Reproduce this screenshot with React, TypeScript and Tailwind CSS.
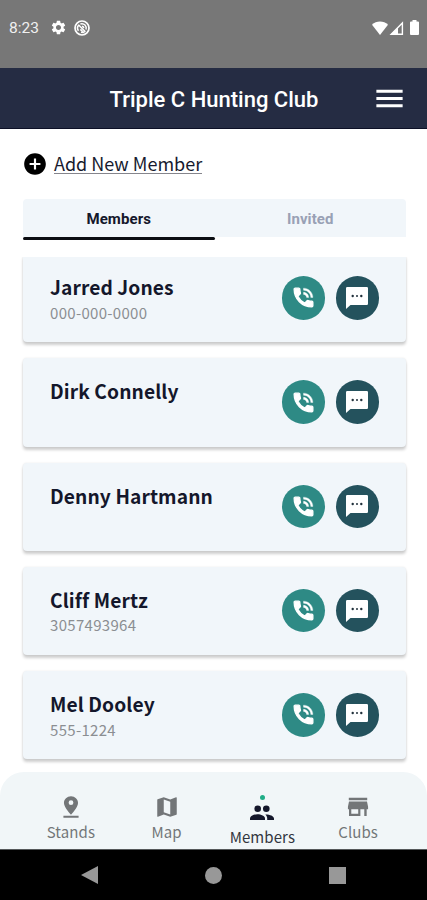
import React, { useState } from "react";
import { MdAddCircle, MdMenu, MdSettings } from "react-icons/md";

interface IMember {
  name: string;
  phone: string;
}

const members: IMember[] = [
  { name: "Jarred Jones", phone: "000-000-0000" },
  { name: "Dirk Connelly", phone: "" },
  { name: "Denny Hartmann", phone: "" },
  { name: "Cliff Mertz", phone: "3057493964" },
  { name: "Mel Dooley", phone: "555-1224" },
];

interface IconProps {
  className?: string;
}

const PinIcon: React.FC<IconProps> = ({ className }) => (
  <svg viewBox="0 0 24 24" className={className} fill="currentColor">
    <path d="M18.500 8.200C18.500 4.700 15.600 2 12 2S5.500 4.700 5.500 8.200C5.500 12.500 12 19 12 19s6.500-6.500 6.500-10.800zM9.800 8a2.200 2.200 0 1 1 4.400 0 2.200 2.200 0 0 1-4.400 0zM5 20v2h14v-2H5z" />
  </svg>
);

const MapIcon: React.FC<IconProps> = ({ className }) => (
  <svg viewBox="0 0 24 24" className={className} fill="currentColor">
    <path d="M20.500 3l-.16.03L15 5.100 9 3 3.360 4.900c-.21.07-.36.25-.36.48V20.500c0 .28.22.5.5.5l.16-.03L9 18.900l6 2.100 5.640-1.900c.21-.07.36-.25.36-.48V3.500c0-.28-.22-.5-.5-.5zM15 19l-6-2.110V5l6 2.110V19z" />
  </svg>
);

const PeopleIcon: React.FC<IconProps> = ({ className }) => (
  <svg viewBox="0 0 24 24" className={className} fill="currentColor">
    <circle cx="7.700" cy="7.700" r="3.300" />
    <circle cx="16.300" cy="7.700" r="3.300" />
    <path d="M0 19v-1.500c0-2.600 4-4.300 7.500-4.300s7.500 1.700 7.500 4.300V19z" />
    <path d="M17.200 19v-1.700c0-1.600-.8-2.900-1.900-3.900 4.400-.1 8.700 1.500 8.700 4.100V19z" />
  </svg>
);

const StoreIcon: React.FC<IconProps> = ({ className }) => (
  <svg viewBox="0 0 24 24" className={className} fill="currentColor">
    <path d="M20.500 3.500h-17v2.300h17V3.500zm.8 10.500v-2.200L20.300 7H3.700l-1 4.800V14h1v6.200h10.500V14h3.600v6.200H20V14h1.300zm-9.100 4.200H5.800V14h6.400v4.200z" />
  </svg>
);

const PhoneIcon: React.FC<IconProps> = ({ className }) => (
  <svg viewBox="0 0 24 24" className={className} fill="currentColor" stroke="currentColor">
    <path
      strokeWidth="1.200"
      d="M20 15.500c-1.250 0-2.450-.2-3.570-.57-.35-.11-.74-.03-1.020.24l-2.200 2.200c-2.830-1.440-5.150-3.750-6.590-6.590l2.200-2.210c.28-.26.36-.65.25-1C8.700 6.450 8.500 5.250 8.500 4c0-.55-.45-1-1-1H4c-.55 0-1 .45-1 1 0 9.390 7.610 17 17 17 .55 0 1-.45 1-1v-3.500c0-.55-.45-1-1-1z"
    />
    <path
      strokeWidth="0.3"
      d="M19 12h2c0-4.970-4.030-9-9-9v2c3.870 0 7 3.130 7 7zm-4 0h2c0-2.760-2.240-5-5-5v2c1.660 0 3 1.340 3 3z"
    />
  </svg>
);

const MessageIcon: React.FC<IconProps> = ({ className }) => (
  <svg viewBox="0 0 22 22" className={className}>
    <path
      fill="currentColor"
      d="M1.200 0h19.600A1.200 1.200 0 0 1 22 1.200v15.600a1.200 1.200 0 0 1-1.200 1.200H4.500L0 22V1.200A1.200 1.200 0 0 1 1.200 0z"
    />
    <g fill="#20303b">
      <circle cx="6.700" cy="9" r="1.200" />
      <circle cx="11" cy="9" r="1" />
      <circle cx="15.300" cy="9" r="1.200" />
    </g>
  </svg>
);

const navItems = [
  { label: "Stands", Icon: PinIcon },
  { label: "Map", Icon: MapIcon },
  { label: "Members", Icon: PeopleIcon },
  { label: "Clubs", Icon: StoreIcon },
];

const StatusBar: React.FC = () => (
  <div className="h-[68px] shrink-0 bg-[#777777] flex items-start justify-between pl-[9px] pr-[7px] pt-[18px] text-white">
    <div className="flex h-[19px] items-center">
      <span className="w-[41px] pt-px font-['Roboto',sans-serif] text-[15.500px] leading-[19px] text-[#f0f0f0]">
        8:23
      </span>
      <MdSettings className="h-[17px] w-[17px]" />
      <svg viewBox="0 0 16 16" className="ml-[7px] h-4 w-4" fill="none" stroke="currentColor">
        <circle cx="8" cy="8" r="7" strokeWidth="1.700" />
        <path d="M4.500 10.800A4.400 4.400 0 0 1 4.900 5M6.400 4A4.400 4.400 0 0 1 12 9.600M10.800 11.400A4.400 4.400 0 0 1 7 12.300" strokeWidth="1.500" />
        <path d="M4.400 4.800l7 7M6.400 9.400l2.400 2.400M8 6.300a2 2 0 0 1 1.800 1.800" strokeWidth="1.500" />
      </svg>
    </div>
    <div className="flex h-[19px] items-center">
      <svg viewBox="0 0 16 14" className="h-[14px] w-4" fill="currentColor">
        <path d="M8 14L0 3.800C2.200 1.600 5 .5 8 .5s5.800 1.100 8 3.300z" />
      </svg>
      <svg viewBox="0 0 15 14" className="ml-px h-[14px] w-[15px]">
        <path d="M13.400 2v11.200H2.200z" fill="none" stroke="currentColor" strokeWidth="1.400" />
        <path d="M9 6.500v7H1.500z" fill="currentColor" />
      </svg>
      <svg viewBox="0 0 9 15" className="ml-[6px] mr-px h-[15px] w-[9px]" fill="currentColor">
        <path d="M2.500 0h4v1.500H8a1 1 0 0 1 1 1V14a1 1 0 0 1-1 1H1a1 1 0 0 1-1-1V2.500a1 1 0 0 1 1-1h1.500z" />
      </svg>
    </div>
  </div>
);

const MemberCard: React.FC<{ member: IMember }> = ({ member }) => (
  <div className="flex h-[88.300px] shrink-0 justify-between rounded-[4px] bg-[#f1f6fa] pl-[27px] pr-[27px] shadow-[0_3px_3px_rgba(0,0,0,0.19),0_0_2px_rgba(0,0,0,0.10)]">
    <div className="pt-[21px]">
      <h3 className="text-[19.200px] font-bold leading-6 tracking-[0.1px] text-[#14172b]">
        {member.name}
      </h3>
      <p className="mt-[3.500px] text-[15px] leading-5 tracking-[0.3px] text-[#8b8e92]">
        {member.phone}
      </p>
    </div>
    <div className="flex gap-[10.500px] pt-[22px]">
      <button className="flex h-[43.500px] w-[43.500px] items-center justify-center rounded-full bg-[#2e8a85] text-white">
        <PhoneIcon className="h-[25px] w-[25px]" />
      </button>
      <button className="flex h-[43.500px] w-[43.500px] items-center justify-center rounded-full bg-[#24525d] text-white">
        <MessageIcon className="h-[22px] w-[22px]" />
      </button>
    </div>
  </div>
);

const App: React.FC = () => {
  const [activeTab, setActiveTab] = useState("Members");
  const [activeNav, setActiveNav] = useState("Members");

  return (
    <div className="flex h-[900px] w-[427px] flex-col overflow-hidden bg-white font-['Noto_Sans_CJK_JP',sans-serif]">
      <StatusBar />

      {/* Header */}
      <header className="grid h-[61px] shrink-0 grid-cols-[61px_1fr_60px] items-center border-b border-[#0c1026] bg-[#252c43] text-white">
        <h1 className="col-start-2 pt-[2px] text-center font-['Roboto',sans-serif] text-[22px] font-medium">
          Triple C Hunting Club
        </h1>
        <button className="flex justify-end pr-5">
          <MdMenu className="h-[35px] w-[35px]" />
        </button>
      </header>

      <main className="flex min-h-0 flex-1 flex-col pl-[23px] pr-[21px]">
        <button className="mt-[23px] flex h-6 items-center gap-[6px] text-left">
          <MdAddCircle className="-ml-px h-[26px] w-[26px] text-black" />
          <span className="border-b border-[#85858c] text-[18px] leading-[19px] text-[#171a2e]">
            Add New Member
          </span>
        </button>

        {/* Tabs */}
        <div className="mt-[23px] flex h-[41px] shrink-0 overflow-hidden rounded-t-[4px] font-['Roboto',sans-serif]">
          {["Members", "Invited"].map((tab) => (
            <button
              key={tab}
              onClick={() => setActiveTab(tab)}
              className={`flex-1 text-[15px] font-bold tracking-[0.1px] ${
                activeTab === tab ? "text-[#14172b]" : "text-[#99a1b5]"
              }`}
            >
              <span className="flex h-[38px] items-center justify-center bg-[#f1f6fa] pt-[2px]">
                {tab}
              </span>
              <span
                className={`block h-[3px] rounded-full ${
                  activeTab === tab ? "bg-[#0b0d12]" : "bg-transparent"
                }`}
              />
            </button>
          ))}
        </div>

        {/* Member list, scrolled a few pixels down */}
        <div className="-mx-1 mt-[17px] flex min-h-0 flex-1 flex-col overflow-hidden px-1">
          <div className="-mt-[3px] flex flex-col gap-4">
            {members.map((member) => (
              <MemberCard key={member.name} member={member} />
            ))}
          </div>
        </div>
      </main>

      {/* Bottom navigation */}
      <nav className="flex h-[77px] shrink-0 justify-center rounded-t-[24px] bg-[#f1f6f8] pl-[23px] pr-[21px]">
        {navItems.map(({ label, Icon }) => {
          const active = activeNav === label;
          return (
            <button
              key={label}
              onClick={() => setActiveNav(label)}
              className={`flex flex-1 flex-col items-center pt-[23px] ${
                active ? "text-[#14172b]" : "text-[#737678]"
              }`}
            >
              {active && (
                <span className="h-[5px] w-[5px] shrink-0 rounded-full bg-[#20ad87]" />
              )}
              <Icon
                className={active ? "mt-px h-6 w-6 shrink-0" : "-mt-px h-[26px] w-[26px] shrink-0"}
              />
              <span
                className={`text-[15px] leading-[24px] tracking-[0.1px] ${
                  active ? "text-[#33363f]" : ""
                }`}
              >
                {label}
              </span>
            </button>
          );
        })}
      </nav>

      {/* Android system buttons */}
      <div className="flex h-[51px] shrink-0 items-center justify-between border-t border-[#55585a] bg-black px-[81px] text-[#989898]">
        <svg viewBox="0 0 17 18" className="h-[18px] w-[17px]" fill="currentColor">
          <path d="M0 9L17 0v18z" />
        </svg>
        <span className="h-[17px] w-[17px] rounded-full bg-current" />
        <span className="h-[17px] w-[17px] bg-current" />
      </div>
    </div>
  );
};

export default App;
